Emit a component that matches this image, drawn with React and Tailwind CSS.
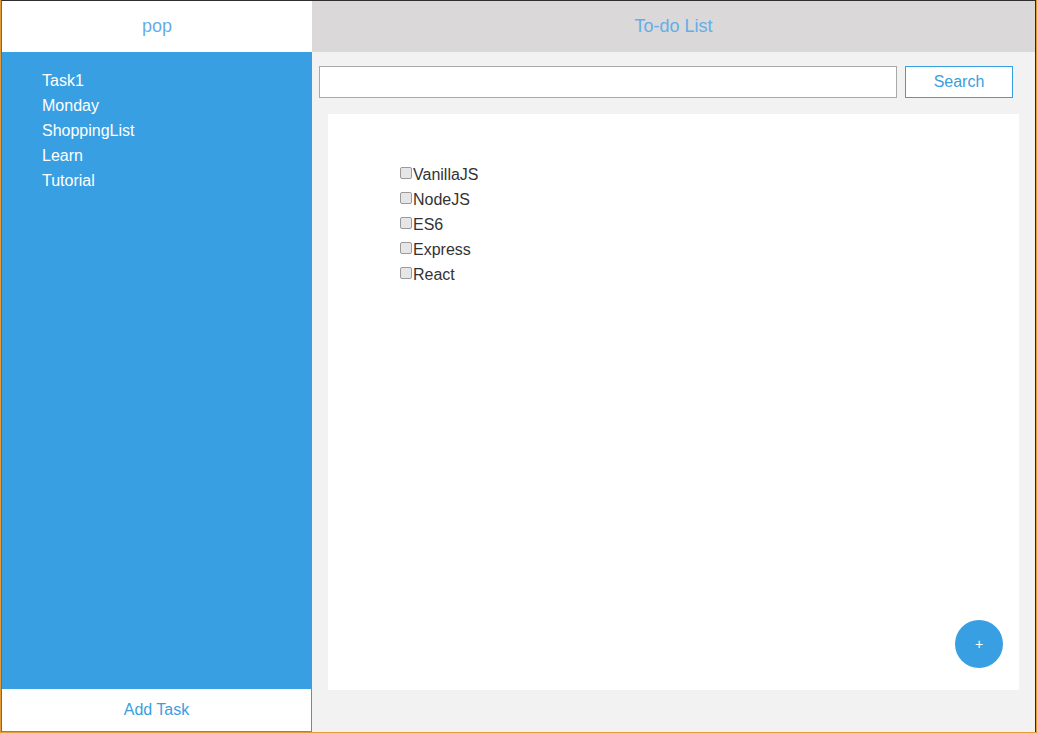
import { useState } from 'react'

const tasks = ['Task1', 'Monday', 'ShoppingList', 'Learn', 'Tutorial']
const todos = ['VanillaJS', 'NodeJS', 'ES6', 'Express', 'React']

const App = () => {
    const [query, setQuery] = useState('')
    const [done, setDone] = useState({})

    return (
        <div className="w-[1037px] h-[733px] bg-[#e39b3a] pl-px pr-px pb-px font-['Liberation_Sans',Arial,sans-serif]">
            <div className="h-full flex border-t border-t-[#2e2e2e] border-l border-l-[#6b6b6b] border-r border-r-[#2b2b2b]">
                {/* Sidebar */}
                <div className="w-[310px] flex flex-col">
                    <div className="h-[51px] bg-white flex items-center justify-center text-[18px] text-[#63aee6]">
                        pop
                    </div>
                    <div className="flex-1 bg-[#38a0e2] pl-10 pt-[16px]">
                        {tasks.map(task => (
                            <div key={task} className="text-white text-[16px] leading-[25px]">{task}</div>
                        ))}
                    </div>
                    <button className="h-[43px] bg-white border-r border-b border-[#3b9ad8] text-[#3d9de0] text-[16px] flex items-center justify-center">
                        Add Task
                    </button>
                </div>

                {/* Main */}
                <div className="flex-1 flex flex-col bg-[#f2f2f2]">
                    <div className="h-[51px] bg-[#dad8d9] flex items-center justify-center text-[18px] text-[#63aee6]">
                        To-do List
                    </div>
                    <div className="flex gap-2 pl-[7px] pr-[22px] pt-[14px]">
                        <input
                            type="text"
                            value={query}
                            onChange={e => setQuery(e.target.value)}
                            className="flex-1 h-[32px] bg-white border border-[#a9a9a9] outline-none px-2 text-[16px]"
                        />
                        <button className="w-[108px] h-[32px] bg-white border border-[#38a0e2] text-[#3d9de0] text-[16px]">
                            Search
                        </button>
                    </div>
                    <div className="relative flex-1 mt-[16px] ml-[16px] mr-[16px] mb-[42px] bg-white pl-[72px] pt-[48px]">
                        {todos.map(todo => (
                            <label key={todo} className="flex items-center text-[16px] leading-[25px] text-[#333]">
                                <input
                                    type="checkbox"
                                    checked={!!done[todo]}
                                    onChange={() => setDone({ ...done, [todo]: !done[todo] })}
                                    className="appearance-none w-[12px] h-[12px] m-0 mr-px -mt-[4px] rounded-[2px] border border-[#9a9a9a] bg-[#e6e6e6] checked:bg-[#38a0e2] checked:border-[#2b7fc0]"
                                />
                                {todo}
                            </label>
                        ))}
                        <button className="absolute right-[16px] bottom-[22px] w-[48px] h-[48px] rounded-full bg-[#38a0e2] text-white text-[14px] flex items-center justify-center">
                            +
                        </button>
                    </div>
                </div>
            </div>
        </div>
    )
}

export default App
